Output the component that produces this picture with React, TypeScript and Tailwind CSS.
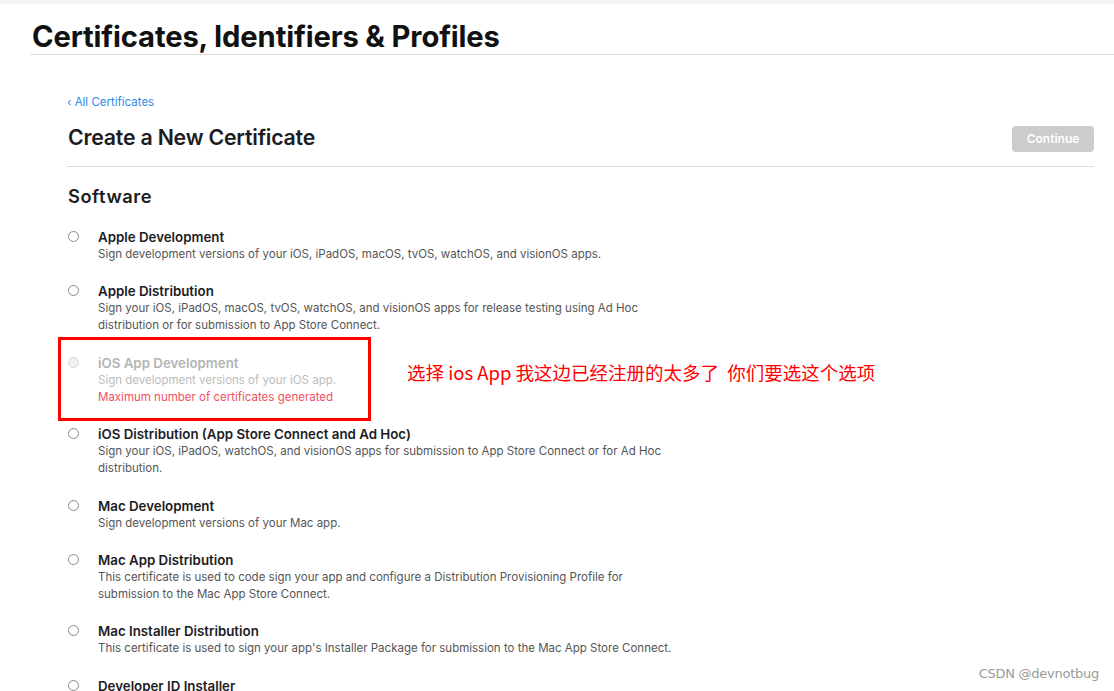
const items = [
  {
    title: "Apple Development",
    lines: ["Sign development versions of your iOS, iPadOS, macOS, tvOS, watchOS, and visionOS apps."],
  },
  {
    title: "Apple Distribution",
    lines: [
      "Sign your iOS, iPadOS, macOS, tvOS, watchOS, and visionOS apps for release testing using Ad Hoc",
      "distribution or for submission to App Store Connect.",
    ],
  },
  {
    title: "iOS App Development",
    lines: ["Sign development versions of your iOS app."],
    disabled: true,
    error: "Maximum number of certificates generated",
  },
  {
    title: "iOS Distribution (App Store Connect and Ad Hoc)",
    lines: [
      "Sign your iOS, iPadOS, watchOS, and visionOS apps for submission to App Store Connect or for Ad Hoc",
      "distribution.",
    ],
  },
  {
    title: "Mac Development",
    lines: ["Sign development versions of your Mac app."],
  },
  {
    title: "Mac App Distribution",
    lines: [
      "This certificate is used to code sign your app and configure a Distribution Provisioning Profile for",
      "submission to the Mac App Store Connect.",
    ],
  },
  {
    title: "Mac Installer Distribution",
    lines: ["This certificate is used to sign your app's Installer Package for submission to the Mac App Store Connect."],
  },
  {
    title: "Developer ID Installer",
    lines: [],
  },
];

function Option({ item }: { item: (typeof items)[number] }) {
  const off = item.disabled;
  return (
    <div className="flex items-start">
      <div className="w-[31px] pt-[2px] pl-[1px]">
        <div
          className={
            off
              ? "w-[11px] h-[11px] rounded-full border border-[#d6d6d6] bg-[#f2f2f2]"
              : "w-[11px] h-[11px] rounded-full border border-[#8a8a8a] bg-white"
          }
        />
      </div>
      <div className="text-[11.5px] leading-[17px]">
        <div className={off ? "text-[13.3px] font-semibold text-[#b4b4b4]" : "text-[13.3px] font-semibold text-[#1d1d1f]"}>
          {item.title}
        </div>
        {item.lines.map((l) => (
          <div key={l} className={off ? "whitespace-nowrap text-[#bcbcbc]" : "whitespace-nowrap text-[#555]"}>
            {l}
          </div>
        ))}
        {item.error && <div className="text-[#f0505f]">{item.error}</div>}
      </div>
    </div>
  );
}

export default function App() {
  return (
    <div className="relative w-[1114px] h-[691px] overflow-hidden bg-white font-['Inter',sans-serif]">
      {/* top bar */}
      <div className="h-[4px] bg-[#f5f5f5]" />

      {/* page heading */}
      <div className="pl-[32px] pt-[15px]">
        <h1 className="text-[29.2px] leading-[35px] font-bold tracking-[-0.005em] text-[#111]">
          Certificates, Identifiers &amp; Profiles
        </h1>
      </div>
      <div className="ml-[30px] border-t border-[#dcdcdc]" />

      <div className="pl-[67px] pr-[20px]">
        <a className="block mt-[40px] text-[11.5px] leading-[15px] text-[#2e8ae6]">‹ All Certificates</a>

        <div className="flex items-center justify-between mt-[12px]">
          <h2 className="text-[21.3px] leading-[26px] font-semibold text-[#1d1d1f] tracking-[-0.01em] pl-[1px]">
            Create a New Certificate
          </h2>
          <button className="w-[82px] h-[26px] rounded-[4px] bg-[#cccccc] text-white text-[12px] font-semibold mt-[4px]">
            Continue
          </button>
        </div>

        <div className="mt-[14px] border-t border-[#dcdcdc]" />

        <h3 className="mt-[17px] pl-[1px] text-[18.3px] leading-[24px] font-semibold tracking-[0.03em] text-[#1d1d1f]">
          Software
        </h3>

        <div className="relative mt-[21px] flex flex-col gap-[20.4px]">
          {items.map((it) => (
            <Option key={it.title} item={it} />
          ))}
        </div>
      </div>

      {/* annotation */}
      <div className="absolute left-[58px] top-[337px] w-[313px] h-[84px] border-[3px] border-[#ff0000]" />
      <div className="absolute left-[407px] top-[359px] text-[18.5px] leading-[26px] text-[#ff0000] font-['Noto_Sans_CJK_SC',sans-serif]">
        选择 ios App 我这边已经注册的太多了&nbsp;&nbsp;你们要选这个选项
      </div>

      <div className="absolute right-[15px] bottom-[8px] text-[13px] text-[#9a9a9a] font-['DejaVu_Sans',sans-serif] tracking-[-0.02em]">
        CSDN @devnotbug
      </div>
    </div>
  );
}
